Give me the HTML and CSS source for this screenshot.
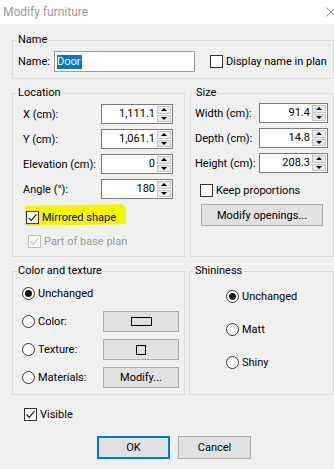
FILE: index.html
```html
<!DOCTYPE html>
<html>
<head>
<meta charset="utf-8">
<link rel="stylesheet" href="styles.css">
</head>
<body>
<div class="dialog">
  <div class="titlebar">
    <span class="title">Modify furniture</span>
    <svg class="close" width="10" height="10" viewBox="0 0 10 10"><path d="M0.5 0.5L9.5 9.5M9.5 0.5L0.5 9.5" stroke="#8a8a8a" stroke-width="1" fill="none"/></svg>
  </div>
  <div class="content">
    <fieldset class="group">
      <legend>Name</legend>
      <div class="name-row">
        <span class="name-lbl">Name:</span>
        <div class="textbox"><span class="sel">Door</span></div>
        <div class="check"><span class="box"></span><span>Display name in plan</span></div>
      </div>
    </fieldset>

    <div class="cols top-cols">
      <fieldset class="group">
        <legend>Location</legend>
        <div class="loc-inner">
          <div class="form loc-form">
            <span>X (cm):</span>
            <div class="spin"><span class="val">1,111.1</span><span class="arrows"><span class="up"></span><span class="down"></span></span></div>
            <span>Y (cm):</span>
            <div class="spin"><span class="val">1,061.1</span><span class="arrows"><span class="up"></span><span class="down"></span></span></div>
            <span>Elevation (cm):</span>
            <div class="spin"><span class="val">0</span><span class="arrows"><span class="up"></span><span class="down"></span></span></div>
            <span>Angle (°):</span>
            <div class="spin"><span class="val">180</span><span class="arrows"><span class="up"></span><span class="down"></span></span></div>
          </div>
          <div class="highlight"><div class="check"><span class="box checked"><svg width="11" height="11" viewBox="0 0 11 11"><path d="M1.5 5.5L4.2 8.3L9.5 2.2" stroke="#1a1a1a" stroke-width="1.2" fill="none"/></svg></span><span>Mirrored shape</span></div></div>
          <div class="check disabled base-plan"><span class="box checked"><svg width="11" height="11" viewBox="0 0 11 11"><path d="M1.5 5.5L4.2 8.3L9.5 2.2" stroke="#bcbcbc" stroke-width="1.2" fill="none"/></svg></span><span>Part of base plan</span></div>
        </div>
      </fieldset>

      <fieldset class="group">
        <legend>Size</legend>
        <div class="size-inner">
          <div class="form size-form">
            <span>Width (cm):</span>
            <div class="spin"><span class="val">91.4</span><span class="arrows"><span class="up"></span><span class="down"></span></span></div>
            <span>Depth (cm):</span>
            <div class="spin"><span class="val">14.8</span><span class="arrows"><span class="up"></span><span class="down"></span></span></div>
            <span>Height (cm):</span>
            <div class="spin"><span class="val">208.3</span><span class="arrows"><span class="up"></span><span class="down"></span></span></div>
          </div>
          <div class="check keep"><span class="box"></span><span>Keep proportions</span></div>
          <div class="btn openings">Modify openings...</div>
        </div>
      </fieldset>
    </div>

    <div class="cols bottom-cols">
      <fieldset class="group">
        <legend>Color and texture</legend>
        <div class="color-inner">
          <div class="radio-row"><span class="radio on"></span><span>Unchanged</span></div>
          <span></span>
          <div class="radio-row"><span class="radio"></span><span>Color:</span></div>
          <div class="btn small"><span class="color-swatch"></span></div>
          <div class="radio-row"><span class="radio"></span><span>Texture:</span></div>
          <div class="btn small"><span class="tex-swatch"></span></div>
          <div class="radio-row"><span class="radio"></span><span>Materials:</span></div>
          <div class="btn small">Modify...</div>
        </div>
      </fieldset>

      <fieldset class="group">
        <legend>Shininess</legend>
        <div class="shine-inner">
          <div class="radio-row"><span class="radio on"></span><span>Unchanged</span></div>
          <div class="radio-row"><span class="radio"></span><span>Matt</span></div>
          <div class="radio-row"><span class="radio"></span><span>Shiny</span></div>
        </div>
      </fieldset>
    </div>

    <div class="check visible"><span class="box checked"><svg width="11" height="11" viewBox="0 0 11 11"><path d="M1.5 5.5L4.2 8.3L9.5 2.2" stroke="#1a1a1a" stroke-width="1.2" fill="none"/></svg></span><span>Visible</span></div>

    <div class="actions">
      <div class="btn ok">OK</div>
      <div class="btn">Cancel</div>
    </div>
  </div>
</div>
</body>
</html>
```

FILE: styles.css
```css
* { box-sizing: border-box; }

html, body {
  margin: 0;
  padding: 0;
  background: #f0f0f0;
}

body {
  font-family: Roboto, "Noto Sans", sans-serif;
  font-size: 11px;
  color: #000;
  width: 334px;
  height: 469px;
  overflow: hidden;
  white-space: nowrap;
}

.dialog {
  width: 334px;
}

.titlebar {
  height: 24px;
  background: #fff;
  display: flex;
  align-items: center;
  justify-content: space-between;
  padding-left: 3px;
}

.title {
  color: #9a9a9a;
  font-size: 12px;
}

.close {
  margin-right: -2px;
  margin-top: -1px;
}

.content {
  padding: 8px 0 0 12px;
}

.group {
  margin: 0;
  padding: 0;
  border: 1px solid #dcdcdc;
  min-width: 0;
}

.group legend {
  margin-left: 4px;
  padding: 0 1px;
  line-height: 16px;
}

/* Name */
.name-row {
  display: flex;
  align-items: center;
  padding: 3px 0 6px 5px;
}

.name-lbl {
  width: 36px;
}

.textbox {
  width: 141px;
  height: 21px;
  border: 1px solid #9b9b9b;
  background: #fff;
  display: flex;
  align-items: center;
  padding-left: 2px;
}

.sel {
  background: #0078d7;
  color: #fff;
  line-height: 14px;
  padding-right: 1px;
}

.name-row .check {
  margin-left: 15px;
}

/* checks */
.check {
  display: flex;
  align-items: center;
  height: 15px;
  gap: 3px;
}

.box {
  width: 13px;
  height: 13px;
  border: 1px solid #333;
  background: #fff;
  display: flex;
  align-items: center;
  justify-content: center;
  flex: none;
}

.disabled {
  color: #9a9a9a;
}

.disabled .box {
  border-color: #bcbcbc;
}

/* columns */
.cols {
  display: grid;
}

.top-cols {
  grid-template-columns: 173px 144px;
  column-gap: 5px;
  margin-top: 6px;
}

.bottom-cols {
  grid-template-columns: 173px 145px;
  column-gap: 4px;
  margin-top: 6px;
}

.form {
  display: grid;
  row-gap: 5px;
  grid-auto-rows: 20px;
  align-items: center;
}

.loc-inner {
  padding: 3px 0 7px 10px;
}

.loc-form {
  grid-template-columns: 78px 72px;
}

.size-inner {
  padding: 2px 0 0 4px;
}

.size-form {
  grid-template-columns: 64px 69px;
}

.spin {
  height: 20px;
  display: flex;
  border: 1px solid #7a7a7a;
  background: #fff;
}

.val {
  flex: 1;
  text-align: right;
  line-height: 18px;
  padding-right: 2px;
}

.arrows {
  width: 15px;
  display: flex;
  flex-direction: column;
  padding: 1px 1px 1px 0;
  gap: 1px;
}

.arrows span {
  flex: 1;
  background: #e9e9e9;
  border: 1px solid #c3c3c3;
  display: flex;
  align-items: center;
  justify-content: center;
}

.up::before {
  content: "";
  border-left: 3px solid transparent;
  border-right: 3px solid transparent;
  border-bottom: 3px solid #000;
}

.down::before {
  content: "";
  border-left: 3px solid transparent;
  border-right: 3px solid transparent;
  border-top: 3px solid #000;
}

.highlight {
  display: inline-flex;
  margin: 6px 0 0 2px;
  padding: 5px 10px 0 1px;
  height: 20px;
  background: #f5f500;
  border-radius: 2px 6px 3px 2px;
  transform: skewY(-1deg);
}

.highlight .check {
  transform: skewY(1deg);
}

.base-plan {
  margin: 8px 0 0 5px;
}

.keep {
  margin: 10px 0 0 5px;
}

.btn {
  background: #e1e1e1;
  border: 1px solid #adadad;
  display: flex;
  align-items: center;
  justify-content: center;
}

.openings {
  width: 122px;
  height: 22px;
  margin: 6px 0 0 6px;
}

/* color and texture */
.color-inner {
  display: grid;
  grid-template-columns: 81px 76px;
  grid-auto-rows: 21px;
  row-gap: 7px;
  align-items: center;
  padding: 4px 0 6px 9px;
}

.color-inner .btn {
  height: 21px;
}

.radio-row {
  display: flex;
  align-items: center;
  gap: 3px;
  height: 15px;
}

.radio {
  width: 13px;
  height: 13px;
  border: 1px solid #333;
  border-radius: 50%;
  background: #fff;
  display: flex;
  align-items: center;
  justify-content: center;
  flex: none;
}

.radio.on::after {
  content: "";
  width: 7px;
  height: 7px;
  border-radius: 50%;
  background: #1a1a1a;
}

.color-swatch {
  width: 21px;
  height: 9px;
  border: 1px solid #000;
}

.tex-swatch {
  width: 10px;
  height: 10px;
  border: 1px solid #000;
}

.shine-inner {
  display: flex;
  flex-direction: column;
  gap: 18px;
  padding: 10px 0 0 36px;
}

.visible {
  margin: 12px 0 0 12px;
}

.actions {
  display: flex;
  gap: 8px;
  margin: 14px 0 0 85px;
}

.actions .btn {
  width: 73px;
  height: 23px;
}

.actions .ok {
  border-color: #0078d7;
  box-shadow: inset 0 0 0 1px #0078d7;
}
```
